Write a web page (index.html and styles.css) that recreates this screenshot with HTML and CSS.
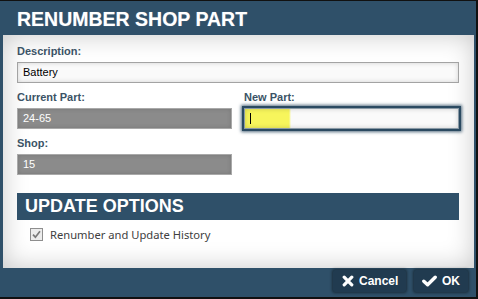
FILE: index.html
```html
<!DOCTYPE html>
<html>
<head>
<meta charset="utf-8">
<link rel="stylesheet" href="styles.css">
</head>
<body>
<div class="dialog">
  <h1 class="title">RENUMBER SHOP PART</h1>
  <div class="panel">
    <div class="field">
      <div class="label">Description:</div>
      <div class="input">Battery</div>
    </div>
    <div class="grid">
      <div class="col">
        <div class="field">
          <div class="label">Current Part:</div>
          <div class="input ro">24-65</div>
        </div>
        <div class="field">
          <div class="label">Shop:</div>
          <div class="input ro">15</div>
        </div>
      </div>
      <div class="col">
        <div class="field">
          <div class="label">New Part:</div>
          <div class="input focus"><span class="caret"></span></div>
        </div>
      </div>
    </div>
    <div class="section">UPDATE OPTIONS</div>
    <div class="option">
      <span class="check">
        <svg width="9" height="9" viewBox="0 0 9 9"><path d="M1 4.6 L3.4 7.2 L8 1.2" fill="none" stroke="#7a7a7a" stroke-width="1.7"/></svg>
      </span>
      <span class="opt-text">Renumber and Update History</span>
    </div>
  </div>
  <div class="footer">
    <button class="btn">
      <svg width="12" height="12" viewBox="0 0 12 12"><path d="M2.2 2.2 L9.8 9.8 M9.8 2.2 L2.2 9.8" stroke="#fff" stroke-width="3.2" stroke-linecap="round"/></svg>
      <span>Cancel</span>
    </button>
    <button class="btn ok">
      <svg width="15" height="12" viewBox="0 0 15 12"><path d="M1.8 6.2 L5.6 9.8 L13.2 2.2" fill="none" stroke="#fff" stroke-width="3.4" stroke-linecap="round" stroke-linejoin="round"/></svg>
      <span>OK</span>
    </button>
  </div>
</div>
</body>
</html>
```
FILE: styles.css
```css
* { box-sizing: border-box; }
html, body { margin: 0; padding: 0; }
body {
  background: #111;
  width: 478px;
  height: 299px;
  overflow: hidden;
  font-family: "Liberation Sans", Arial, sans-serif;
}
.dialog {
  width: 476px;
  height: 296px;
  margin-top: 1px;
  background: #2f5069;
  display: flex;
  flex-direction: column;
}
.title {
  margin: 0;
  height: 34px;
  padding: 3px 0 0 17px;
  font-size: 19.5px;
  line-height: 31px;
  font-weight: bold;
  color: #fff;
  text-shadow: 0 0 1px rgba(255, 255, 255, 0.4);
}
.panel {
  margin: 0 2px 0 3px;
  height: 233px;
  flex: none;
  background: #fff;
  box-shadow: inset 0 0 26px rgba(0, 0, 0, 0.22);
  padding: 10px 15px 0 14px;
}
.field {
  display: flex;
  flex-direction: column;
  gap: 4px;
  margin-bottom: 8px;
}
.label {
  font-size: 11px;
  font-weight: bold;
  line-height: 13px;
  color: #3b5366;
}
.input {
  height: 21px;
  border: 1px solid #a3a3a3;
  background: #fafafa;
  box-shadow: inset 0 0 5px rgba(0, 0, 0, 0.16);
  font-size: 11px;
  line-height: 19px;
  padding-left: 5px;
  color: #000;
}
.input.ro {
  background: #8b8b8b;
  color: #fff;
  border-color: #a9a9a9;
  box-shadow: inset 0 0 4px rgba(0, 0, 0, 0.15);
}
.input.focus {
  border-color: #8a9aa6;
  background: linear-gradient(90deg, #f7f55c 0, #f7f55c 44px, #fafafa 46px);
  box-shadow: 0 0 0 2px #2b4a61, 0 0 3px 3px rgba(43, 74, 97, 0.8), inset 0 0 5px rgba(0, 0, 0, 0.18);
  display: flex;
  align-items: center;
}
.caret {
  width: 1px;
  height: 11px;
  background: #000;
}
.grid {
  display: grid;
  grid-template-columns: 215px 215px;
  column-gap: 12px;
}
.section {
  margin-top: 10px;
  height: 27px;
  background: #2f5069;
  color: #fff;
  font-size: 18px;
  font-weight: bold;
  line-height: 27px;
  padding-left: 8px;
}
.option {
  margin-top: 8px;
  display: flex;
  align-items: center;
  gap: 7px;
  padding-left: 13px;
  height: 13px;
}
.check {
  width: 13px;
  height: 13px;
  border: 1px solid #8e8e8e;
  background: #ececec;
  display: flex;
  align-items: center;
  justify-content: center;
}
.check svg { display: block; }
.opt-text {
  font-family: "Noto Sans", "Open Sans", sans-serif;
  font-size: 11.2px;
  color: #404040;
  line-height: 13px;
}
.footer {
  flex: 1;
  display: flex;
  justify-content: flex-end;
  align-items: flex-start;
  gap: 8px;
  padding: 2px 8px 0 0;
}
.btn {
  height: 22px;
  border: none;
  border-radius: 2px;
  background: #213b50;
  box-shadow: 0 0 3px 1px rgba(0, 0, 0, 0.45);
  color: #fff;
  font-family: "Liberation Sans", Arial, sans-serif;
  font-size: 12px;
  font-weight: bold;
  display: flex;
  align-items: center;
  gap: 5px;
  padding: 0 8px 0 9px;
  width: 73px;
}
.btn.ok {
  width: 54px;
  padding: 0 9px 0 8px;
}
.btn svg { display: block; flex: none; }
```
